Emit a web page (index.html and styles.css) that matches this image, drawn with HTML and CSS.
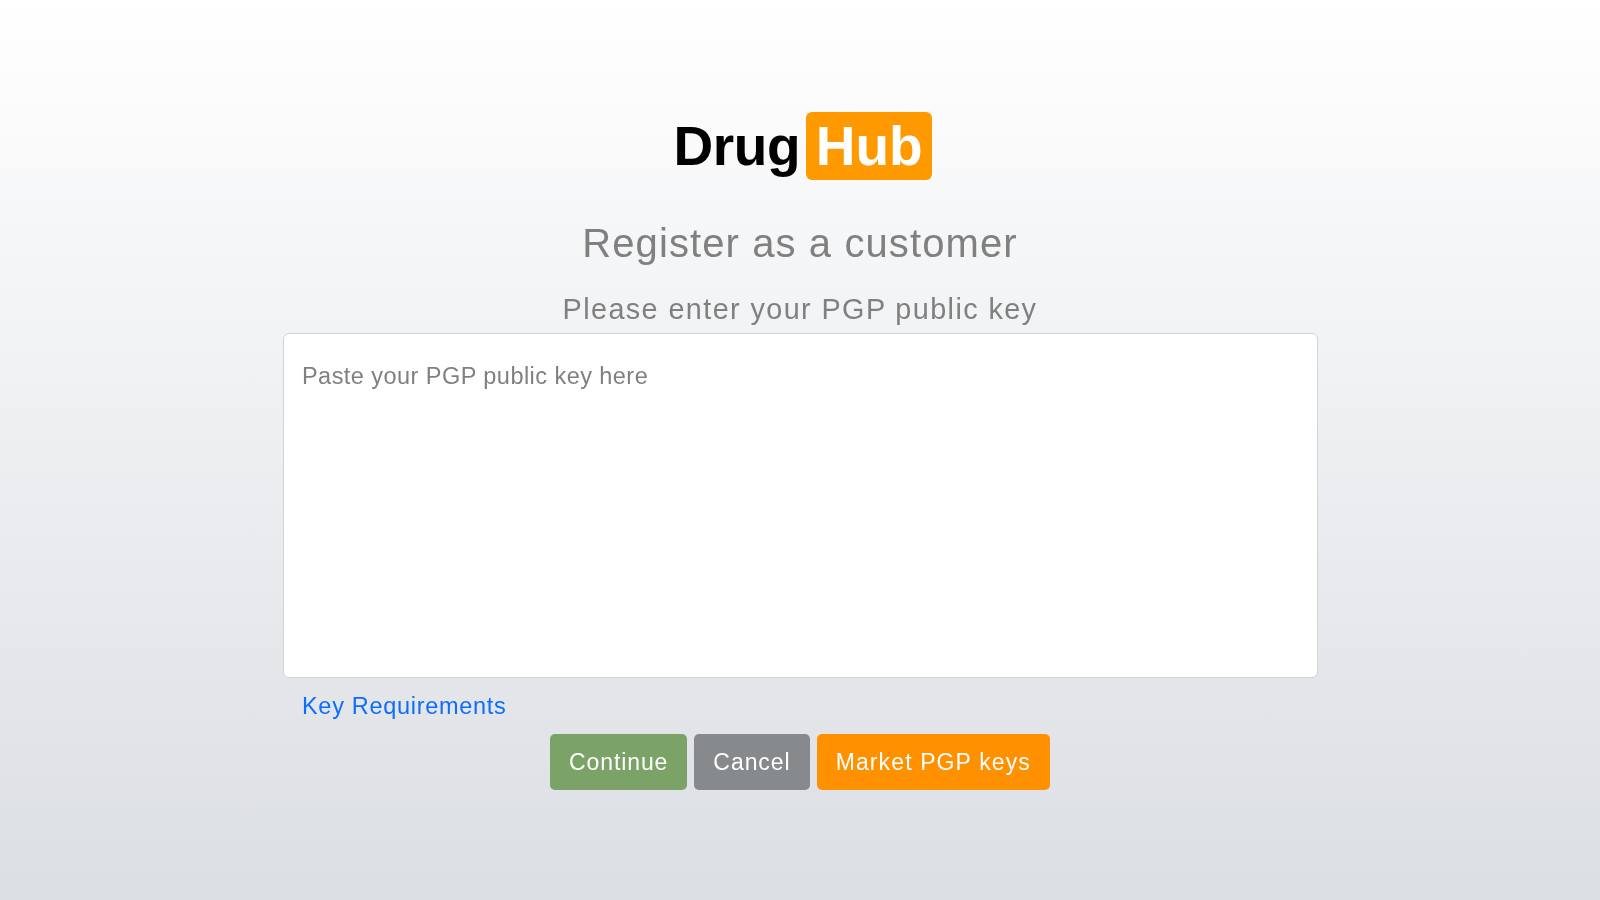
FILE: index.html
```html
<!DOCTYPE html>
<html lang="en">
<head>
<meta charset="utf-8">
<title>Register as a customer</title>
<link rel="stylesheet" href="styles.css">
</head>
<body>
<main class="page">
  <div class="logo"><span class="logo-text">Drug</span><span class="logo-badge">Hub</span></div>
  <h1 class="title">Register as a customer</h1>
  <form class="form">
    <label class="prompt" for="key">Please enter your PGP public key</label>
    <textarea class="key-input" id="key" placeholder="Paste your PGP public key here"></textarea>
    <div class="link-row"><a class="req-link" href="#">Key Requirements</a></div>
    <div class="actions">
      <button class="btn btn-green" type="button">Continue</button>
      <button class="btn btn-gray" type="button">Cancel</button>
      <button class="btn btn-orange" type="button">Market PGP keys</button>
    </div>
  </form>
</main>
</body>
</html>
```
FILE: styles.css
```css
html, body {
  margin: 0;
  height: 100%;
}
body {
  background: linear-gradient(180deg, #ffffff 0%, #dbdee3 100%);
  font-family: "Liberation Sans", Arial, sans-serif;
}
.page {
  box-sizing: border-box;
  height: 900px;
  padding-top: 112px;
  display: flex;
  flex-direction: column;
  align-items: center;
  will-change: opacity;
}
.logo {
  display: flex;
  align-items: center;
  gap: 6px;
  padding-left: 5.6px;
  font-size: 55px;
  font-weight: 700;
  line-height: 68px;
}
.logo-text {
  color: #000;
  letter-spacing: -0.4px;
}
.logo-badge {
  background: #ff9900;
  color: #fff;
  border-radius: 6px;
  padding: 0 9.5px;
}
.title {
  margin: 39px 0 0;
  font-size: 40px;
  font-weight: 400;
  line-height: 48px;
  letter-spacing: 1.1px;
  color: #808080;
}
.form {
  width: 1035px;
  margin-top: 22px;
  display: flex;
  flex-direction: column;
}
.prompt {
  padding-bottom: 3px;
  text-align: center;
  font-size: 28.8px;
  line-height: 41px;
  letter-spacing: 1.4px;
  color: #808080;
}
.key-input {
  box-sizing: border-box;
  display: block;
  width: 100%;
  height: 345px;
  padding: 24px 18.5px;
  background: #fff;
  border: 1px solid #ced4da;
  border-radius: 6px;
  font: 400 23.5px/36px "Liberation Sans", Arial, sans-serif;
  letter-spacing: 0.45px;
  resize: none;
  outline: none;
}
.key-input::placeholder {
  color: #808080;
  opacity: 1;
}
.link-row {
  padding: 10px 19.5px 7px;
  line-height: 36px;
}
.req-link {
  color: #0d6efd;
  font-size: 23.5px;
  letter-spacing: 0.7px;
  text-decoration: none;
}
.actions {
  display: flex;
  justify-content: center;
  gap: 7px;
}
.btn {
  box-sizing: border-box;
  height: 56px;
  padding: 9px 18px;
  border: 1px solid transparent;
  border-radius: 5px;
  color: #fff;
  font: 400 23px/36px "Liberation Sans", Arial, sans-serif;
  letter-spacing: 0.9px;
}
.btn-green { background: #7ba367; }
.btn-gray { background: #868a8d; letter-spacing: 0.95px; }
.btn-orange { background: #ff9100; letter-spacing: 1.12px; }
```
